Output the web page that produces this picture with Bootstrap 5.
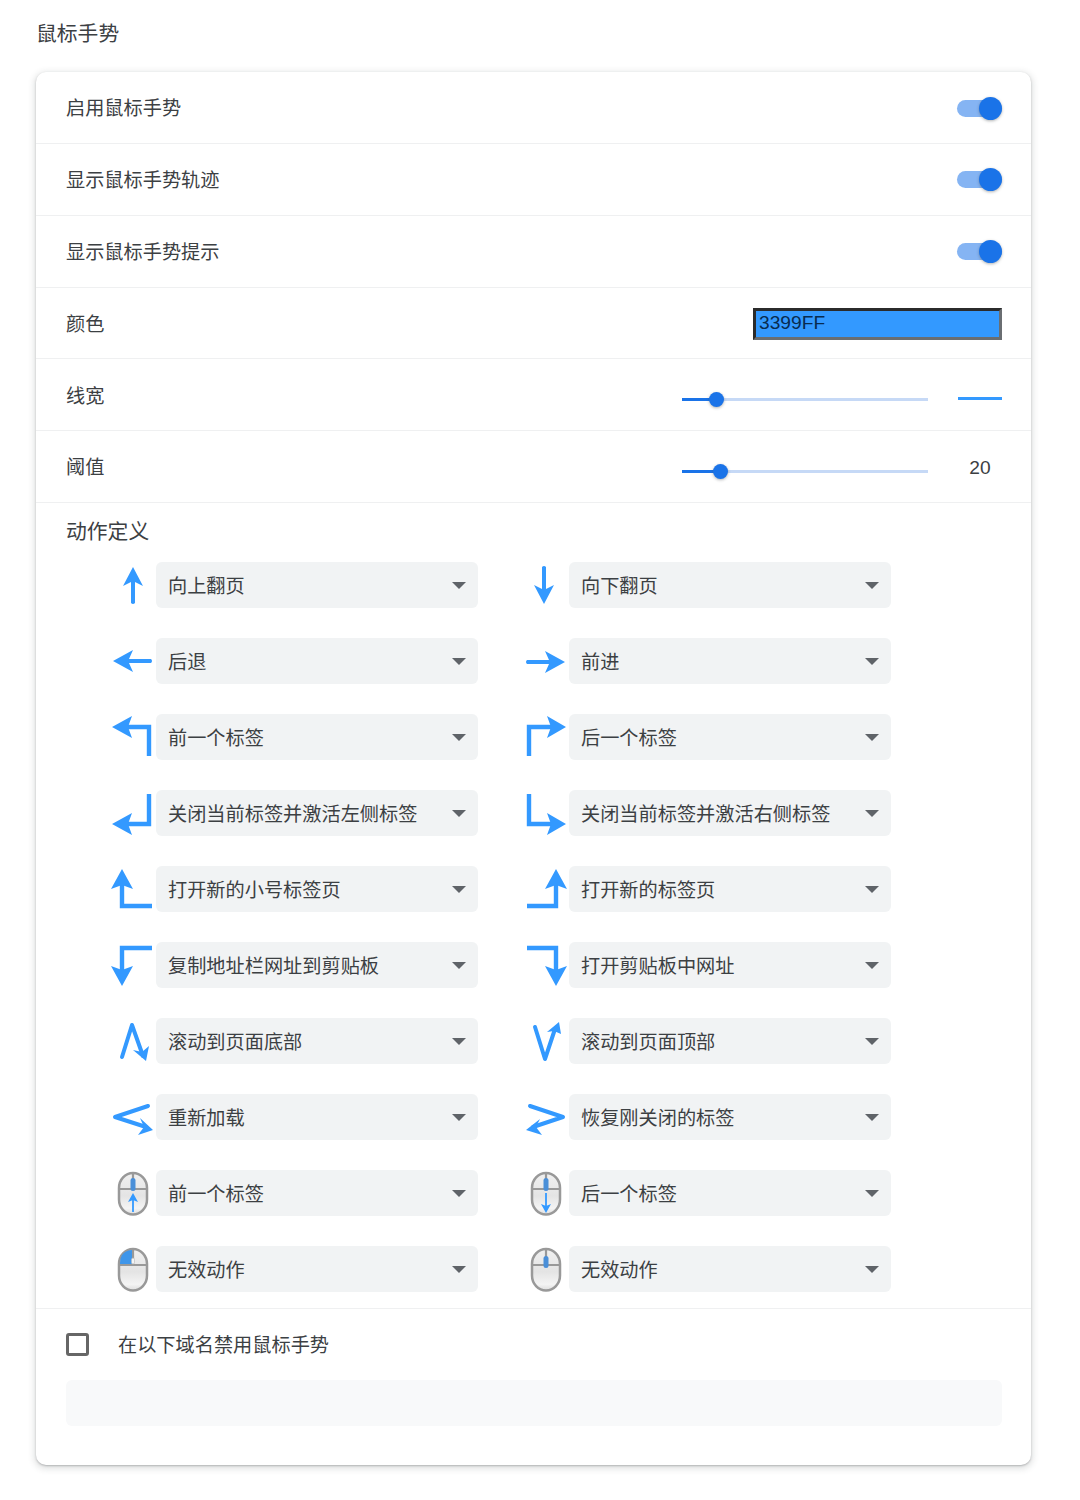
<!doctype html>
<html lang="zh-CN">
<head>
<meta charset="utf-8">
<title>鼠标手势</title>
<link href="https://cdn.jsdelivr.net/npm/bootstrap@5.3.0/dist/css/bootstrap.min.css" rel="stylesheet">
<style>
body{background:#fff;font-family:"Liberation Sans","Noto Sans CJK SC",sans-serif;color:#3c4043;font-size:19.2px;min-height:1500px}
.page-title{font-size:20.8px;line-height:26px;margin:21px 0 26px 36px;height:25px;font-weight:400}
.panel{margin-left:36px;width:995px;height:1393px;border:0;border-radius:10px;box-shadow:0 1px 2px rgba(60,64,67,.3),0 2px 6px 2px rgba(60,64,67,.15);background:#fff}
.opt-row{height:71.83px;padding:0 29px 0 30px;border-bottom:1px solid #eff0f1}
.opt-row:first-child{height:72px}
.cap{margin:2px 0 -2px}
.tgl.form-check-input{appearance:none;position:relative;width:45px;height:17px;margin:1px 0 0;border:0;border-radius:9px;background:#85b4f3;background-image:none;box-shadow:none}
.tgl.form-check-input::after{content:"";position:absolute;right:0;top:-3px;width:23px;height:23px;border-radius:50%;background:#1a73e8;box-shadow:0 1px 3px rgba(60,64,67,.4)}
.hex-box{width:249px;height:32px;margin-top:1px;padding:0 0 2px 3px;border-style:solid;border-width:3px;border-color:#2b2b2b #6a6e72 #6a6e72 #2b2b2b;background:#3399ff;color:#082b4f;font-size:19.2px;line-height:24px;border-radius:0;outline:0}
.slide-range.form-range{width:246px;height:16px;padding:0;margin-top:9px}
.slide-range.form-range::-webkit-slider-runnable-track{height:3px;border-radius:0;background:linear-gradient(to right,#1a73e8 var(--fill),#c6d9f6 var(--fill))}
.slide-range.form-range::-webkit-slider-thumb{width:15px;height:15px;margin-top:-6px;border-radius:50%;background:#1a73e8;box-shadow:0 1px 3px rgba(60,64,67,.4)}
.slide-side{width:44px;margin-left:30px}
.width-line{height:3px;background:#3399ff;margin-top:8px}
.action-head{padding:15px 30px 0;line-height:28px;height:59px;font-size:20.8px}
.gesture-grid{padding-left:77px;row-gap:30px;column-gap:48px;display:grid;grid-template-columns:365px 365px;height:730px;margin-bottom:16px}
.gesture-item{height:46px}
.g-icon{width:40px;height:40px;flex:none;margin-right:3px;overflow:visible}
.g-mouse{height:46px;margin-top:1px}
.g-icon .ln{fill:none;stroke:#3399ff;stroke-width:4.4}
.g-icon .ln3{fill:none;stroke:#3399ff;stroke-width:4;stroke-linecap:round;stroke-linejoin:round}
.g-icon .hd{fill:#3399ff}
.act-select.form-select{width:322px;height:46px;border:0;border-radius:6px;background-color:#f1f3f4;color:#3c4043;font-size:19.2px;padding:4px 36px 0 12px;background-image:url("data:image/svg+xml,%3csvg xmlns='http://www.w3.org/2000/svg' width='14' height='7'%3e%3cpath d='M0 0h14L7 7z' fill='%235f6368'/%3e%3c/svg%3e");background-size:14px 7px;background-position:right 12px center;box-shadow:none}
.domain-row{border-top:1px solid #eff0f1;padding:21px 30px 0}
.chk.form-check-input{width:23px;height:23px;margin:0 29px 0 0;border:3px solid #666;border-radius:3px;background:#fff;box-shadow:none;flex:none}
.domain-input.form-control{width:936px;height:46px;margin-top:21px;border:0;border-radius:6px;background:#f8f9fa;box-shadow:none}
</style>
</head>
<body>
<svg width="0" height="0" class="d-block position-absolute" aria-hidden="true">
<defs>
<linearGradient id="mb" x1="0" y1="0" x2="0" y2="1"><stop offset="0" stop-color="#f1f1f1"/><stop offset=".55" stop-color="#e4e4e4"/><stop offset=".85" stop-color="#f4f4f4"/><stop offset="1" stop-color="#ddd"/></linearGradient>
<g id="mouse-base">
<rect x="6" y="2" width="28" height="41.5" rx="14" ry="15" fill="url(#mb)" stroke="#999" stroke-width="2.5"/>
<path d="M6 18H34M20 2V18" stroke="#999" stroke-width="2.2" fill="none"/>
</g>
</defs>
</svg>
<h1 class="page-title">鼠标手势</h1>
<div class="card panel">
  <div class="opt-row d-flex align-items-center justify-content-between"><span class="cap">启用鼠标手势</span><input class="form-check-input tgl" type="checkbox" checked aria-label="启用鼠标手势"></div>
  <div class="opt-row d-flex align-items-center justify-content-between"><span class="cap">显示鼠标手势轨迹</span><input class="form-check-input tgl" type="checkbox" checked aria-label="显示鼠标手势轨迹"></div>
  <div class="opt-row d-flex align-items-center justify-content-between"><span class="cap">显示鼠标手势提示</span><input class="form-check-input tgl" type="checkbox" checked aria-label="显示鼠标手势提示"></div>
  <div class="opt-row d-flex align-items-center justify-content-between"><span class="cap">颜色</span><input class="hex-box" type="text" value="3399FF" aria-label="颜色"></div>
  <div class="opt-row d-flex align-items-center"><span class="cap me-auto">线宽</span><input class="form-range slide-range" type="range" min="0" max="100" step="0.1" value="11.9" style="--fill:35px" aria-label="线宽"><div class="slide-side"><div class="width-line"></div></div></div>
  <div class="opt-row d-flex align-items-center"><span class="cap me-auto">阈值</span><input class="form-range slide-range" type="range" min="0" max="100" step="0.1" value="13.6" style="--fill:39px" aria-label="阈值"><div class="slide-side text-center cap">20</div></div>
  <div class="action-head">动作定义</div>
  <div class="gesture-grid">
    <div class="gesture-item d-flex align-items-center"><svg class="g-icon" viewBox="0 0 40 40"><path class="hd" d="M20 2 30 21 22 17V38Q20 40 18 38V17L10 21Z"/></svg><select class="form-select act-select"><option>向上翻页</option></select></div>
    <div class="gesture-item d-flex align-items-center"><svg class="g-icon" viewBox="0 0 40 40"><path class="hd" d="M18 39 8 20 16 24V2Q18 0 20 2V24L28 20Z"/></svg><select class="form-select act-select"><option>向下翻页</option></select></div>

    <div class="gesture-item d-flex align-items-center"><svg class="g-icon" viewBox="0 0 40 40"><path class="hd" d="M0 20 20 9 16 18H38Q40 20 38 22H16L20 31Z"/></svg><select class="form-select act-select"><option>后退</option></select></div>
    <div class="gesture-item d-flex align-items-center"><svg class="g-icon" viewBox="0 0 40 40"><path class="hd" d="M39 21 19 10 23 19H1Q-1 21 1 23H23L19 32Z"/></svg><select class="form-select act-select"><option>前进</option></select></div>

    <div class="gesture-item d-flex align-items-center"><svg class="g-icon" viewBox="0 0 40 40"><path class="ln" d="M36 39V10H14"/><path class="hd" d="M-1 10 19-1 15 10 19 21Z"/></svg><select class="form-select act-select"><option>前一个标签</option></select></div>
    <div class="gesture-item d-flex align-items-center"><svg class="g-icon" viewBox="0 0 40 40"><path class="ln" d="M3 39V10H26"/><path class="hd" d="M40 10 21-1 25 10 21 21Z"/></svg><select class="form-select act-select"><option>后一个标签</option></select></div>

    <div class="gesture-item d-flex align-items-center"><svg class="g-icon" viewBox="0 0 40 40"><path class="ln" d="M36 1V31H14"/><path class="hd" d="M-1 31 19 20 15 31 19 42Z"/></svg><select class="form-select act-select"><option>关闭当前标签并激活左侧标签</option></select></div>
    <div class="gesture-item d-flex align-items-center"><svg class="g-icon" viewBox="0 0 40 40"><path class="ln" d="M3 1V31H26"/><path class="hd" d="M40 31 21 20 25 31 21 42Z"/></svg><select class="form-select act-select"><option>关闭当前标签并激活右侧标签</option></select></div>

    <div class="gesture-item d-flex align-items-center"><svg class="g-icon" viewBox="0 0 40 40"><path class="ln" d="M39 37H9V14"/><path class="hd" d="M9 0 20 20 9 16-2 20Z"/></svg><select class="form-select act-select"><option>打开新的小号标签页</option></select></div>
    <div class="gesture-item d-flex align-items-center"><svg class="g-icon" viewBox="0 0 40 40"><path class="ln" d="M1 37H30V14"/><path class="hd" d="M30 0 41 20 30 16 19 20Z"/></svg><select class="form-select act-select"><option>打开新的标签页</option></select></div>

    <div class="gesture-item d-flex align-items-center"><svg class="g-icon" viewBox="0 0 40 40"><path class="ln" d="M39 3H9V27"/><path class="hd" d="M9 41 20 21 9 25-2 21Z"/></svg><select class="form-select act-select"><option>复制地址栏网址到剪贴板</option></select></div>
    <div class="gesture-item d-flex align-items-center"><svg class="g-icon" viewBox="0 0 40 40"><path class="ln" d="M1 3H30V27"/><path class="hd" d="M30 41 41 21 30 25 19 21Z"/></svg><select class="form-select act-select"><option>打开剪贴板中网址</option></select></div>

    <div class="gesture-item d-flex align-items-center"><svg class="g-icon" viewBox="0 0 40 40"><path class="ln3" d="M9 36 19 4 30 35"/><path class="hd" d="M33 40 20 29 29 31 36 25Z"/></svg><select class="form-select act-select"><option>滚动到页面底部</option></select></div>
    <div class="gesture-item d-flex align-items-center"><svg class="g-icon" viewBox="0 0 40 40"><path class="ln3" d="M9 6 19 38 29 8"/><path class="hd" d="M33 1 21 11 28 10 35 13Z"/></svg><select class="form-select act-select"><option>滚动到页面顶部</option></select></div>

    <div class="gesture-item d-flex align-items-center"><svg class="g-icon" viewBox="0 0 40 40"><path class="ln3" d="M35 9 2 20 33 30"/><path class="hd" d="M40 33 27 21 31 30 25 38Z"/></svg><select class="form-select act-select"><option>重新加载</option></select></div>
    <div class="gesture-item d-flex align-items-center"><svg class="g-icon" viewBox="0 0 40 40"><path class="ln3" d="M4 9 37 20 7 30"/><path class="hd" d="M0 33 14 22 10 30 16 38Z"/></svg><select class="form-select act-select"><option>恢复刚关闭的标签</option></select></div>

    <div class="gesture-item d-flex align-items-center"><svg class="g-icon g-mouse" viewBox="0 0 40 46"><use href="#mouse-base"/><rect x="17.5" y="7" width="5" height="13" rx="2.5" fill="#4a8fd8"/><path d="M20 41V26" stroke="#3399ff" stroke-width="1.8"/><path d="M20 22 25 31 20 29 15 31Z" fill="#3399ff"/></svg><select class="form-select act-select"><option>前一个标签</option></select></div>
    <div class="gesture-item d-flex align-items-center"><svg class="g-icon g-mouse" viewBox="0 0 40 46"><use href="#mouse-base"/><rect x="17.5" y="7" width="5" height="13" rx="2.5" fill="#4a8fd8"/><path d="M20 22V36" stroke="#3399ff" stroke-width="1.8"/><path d="M20 42 25 33 20 35 15 33Z" fill="#3399ff"/></svg><select class="form-select act-select"><option>后一个标签</option></select></div>

    <div class="gesture-item d-flex align-items-center"><svg class="g-icon g-mouse" viewBox="0 0 40 46"><use href="#mouse-base"/><path d="M7 17V16C7 8 12 3 19 3V17Z" fill="#3f96ea"/><rect x="18.5" y="11" width="3" height="6" rx="1.5" fill="#f4f4f4" stroke="#bbb" stroke-width=".6"/></svg><select class="form-select act-select"><option>无效动作</option></select></div>
    <div class="gesture-item d-flex align-items-center"><svg class="g-icon g-mouse" viewBox="0 0 40 46"><use href="#mouse-base"/><rect x="17.5" y="9" width="5" height="12" rx="2.5" fill="#4a8fd8"/></svg><select class="form-select act-select"><option>无效动作</option></select></div>
  </div>
  <div class="domain-row">
    <label class="d-flex align-items-center"><input class="form-check-input chk" type="checkbox"><span class="cap">在以下域名禁用鼠标手势</span></label>
    <input class="form-control domain-input" type="text" aria-label="域名">
  </div>
</div>
<script src="https://cdn.jsdelivr.net/npm/bootstrap@5.3.0/dist/js/bootstrap.bundle.min.js"></script>
</body>
</html>
